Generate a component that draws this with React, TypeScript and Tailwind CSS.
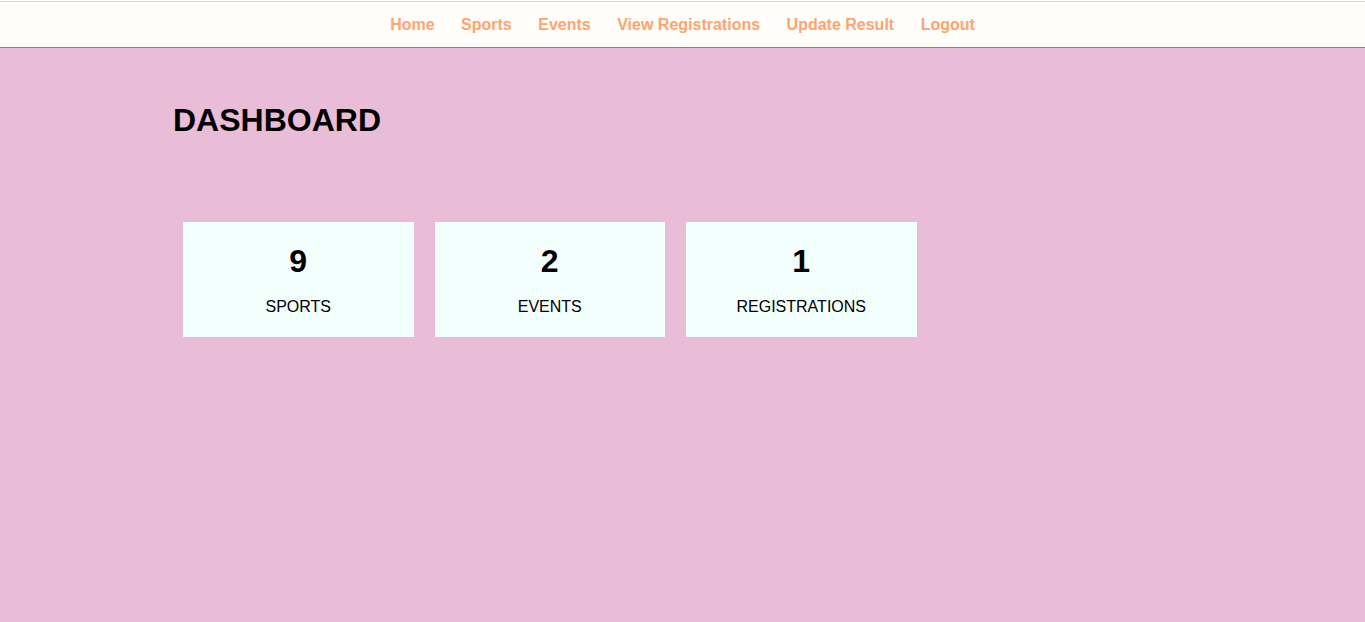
const links = ['Home', 'Sports', 'Events', 'View Registrations', 'Update Result', 'Logout'];

const stats = [
  { value: 9, label: 'SPORTS' },
  { value: 2, label: 'EVENTS' },
  { value: 1, label: 'REGISTRATIONS' },
];

export default function App() {
  return (
    <div className="min-h-screen bg-[#e9bdd7] font-['Liberation_Sans',Arial,sans-serif] text-black">
      {/* Top nav */}
      <nav className="mt-px h-[47px] border-t border-b border-t-[#dcdcd6] border-b-[#858585] bg-[#fffefa] flex items-center justify-center gap-[26.5px]">
        {links.map((link) => (
          <a key={link} href="#" className="text-[16px] leading-[18px] font-bold text-[#ffa36f]">
            {link}
          </a>
        ))}
      </nav>

      <div className="pl-[173px]">
        <h1 className="mt-[54px] text-[32px] leading-[36px] font-bold">DASHBOARD</h1>

        {/* Stat cards */}
        <div className="mt-[84px] ml-[10px] flex gap-[21px]">
          {stats.map((stat) => (
            <div key={stat.label} className="w-[230.5px] h-[115px] bg-[#f3fffd] flex flex-col items-center pt-[21px]">
              <div className="text-[32px] leading-[36px] font-bold">{stat.value}</div>
              <div className="mt-[19px] text-[16px] leading-[18px]">{stat.label}</div>
            </div>
          ))}
        </div>
      </div>
    </div>
  );
}
